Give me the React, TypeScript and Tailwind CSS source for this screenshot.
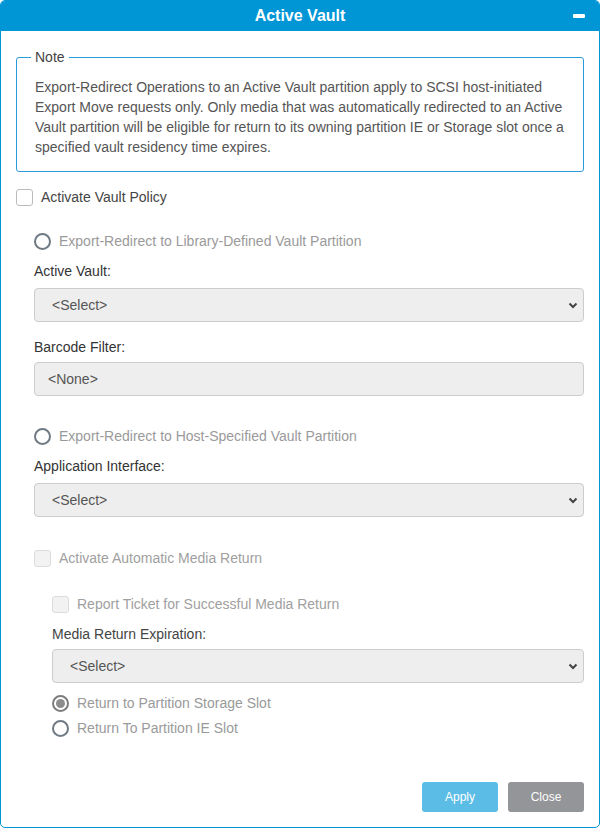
import React from 'react';

const Chevron = () => (
  <svg width="10" height="7" viewBox="0 0 10 7" className="shrink-0">
    <path d="M1.5 1.5 L5 5 L8.5 1.5" fill="none" stroke="#444" strokeWidth="2" />
  </svg>
);

const SelectBox = ({ value }: { value: string }) => (
  <div className="flex items-center justify-between h-[34px] bg-[#eeeeee] border border-[#cccccc] rounded-[4px] pl-[17px] pr-[5px] text-[#555]">
    <span>{value}</span>
    <Chevron />
  </div>
);

const Radio = ({ label, checked = false }: { label: string; checked?: boolean }) => (
  <div className="flex items-center h-[20px] gap-[8px] text-[#9a9a9a]">
    {checked ? (
      <span className="w-[17px] h-[17px] rounded-full border-2 border-[#7d7d7d] flex items-center justify-center">
        <span className="w-[9px] h-[9px] rounded-full bg-[#8c8c8c]" />
      </span>
    ) : (
      <span className="w-[17px] h-[17px] rounded-full border-2 border-[#6f7a84]" />
    )}
    <span>{label}</span>
  </div>
);

const Checkbox = ({ label, disabled = false }: { label: string; disabled?: boolean }) => (
  <div className={`flex items-center h-[20px] gap-[8px] ${disabled ? 'text-[#a0a0a0]' : 'text-[#444]'}`}>
    <span
      className={`w-[17px] h-[17px] rounded-[3px] border ${
        disabled ? 'bg-[#f2f2f2] border-[#dcdcdc]' : 'bg-white border-[#bbbbbb]'
      }`}
    />
    <span>{label}</span>
  </div>
);

const App = () => {
  return (
    <div
      className="w-[600px] h-[828px] bg-white border border-[#0096d6] rounded-[5px] overflow-hidden flex flex-col text-[14px] leading-[20px]"
      style={{ fontFamily: '"Liberation Sans", Arial, sans-serif' }}
    >
      <div className="relative h-[30px] bg-[#0096d6] flex items-center justify-center">
        <span className="text-white font-bold text-[16px]">Active Vault</span>
        <span className="absolute right-[14px] top-[13px] w-[12px] h-[4px] bg-white rounded-[1px]" />
      </div>

      <div className="flex flex-col flex-1 pl-[15px] pr-[15px]">
        <fieldset className="mt-[16px] border border-[#2a9bd8] rounded-[3px] pl-[18px] pr-[18px] pt-[10px] pb-[14px] text-[#555]">
          <legend className="-ml-[4px] px-[4px] text-[#444]">Note</legend>
          <p>
            Export-Redirect Operations to an Active Vault partition apply to SCSI host-initiated
            Export Move requests only. Only media that was automatically redirected to an Active
            Vault partition will be eligible for return to its owning partition IE or Storage slot
            once a specified vault residency time expires.
          </p>
        </fieldset>

        <div className="mt-[15px]">
          <Checkbox label="Activate Vault Policy" />
        </div>

        <div className="ml-[18px] flex flex-col">
          <div className="mt-[24px]">
            <Radio label="Export-Redirect to Library-Defined Vault Partition" />
          </div>
          <div className="mt-[10px] text-[#333]">Active Vault:</div>
          <div className="mt-[7px]">
            <SelectBox value="<Select>" />
          </div>
          <div className="mt-[15px] text-[#333]">Barcode Filter:</div>
          <div className="mt-[5px] h-[34px] bg-[#eeeeee] border border-[#cccccc] rounded-[4px] pl-[13px] flex items-center text-[#555]">
            &lt;None&gt;
          </div>

          <div className="mt-[30px]">
            <Radio label="Export-Redirect to Host-Specified Vault Partition" />
          </div>
          <div className="mt-[10px] text-[#333]">Application Interface:</div>
          <div className="mt-[7px]">
            <SelectBox value="<Select>" />
          </div>

          <div className="mt-[31px]">
            <Checkbox label="Activate Automatic Media Return" disabled />
          </div>

          <div className="ml-[18px] flex flex-col">
            <div className="mt-[26px]">
              <Checkbox label="Report Ticket for Successful Media Return" disabled />
            </div>
            <div className="mt-[10px] text-[#444]">Media Return Expiration:</div>
            <div className="mt-[5px]">
              <SelectBox value="<Select>" />
            </div>
            <div className="mt-[10px]">
              <Radio label="Return to Partition Storage Slot" checked />
            </div>
            <div className="mt-[5px]">
              <Radio label="Return To Partition IE Slot" />
            </div>
          </div>
        </div>

        <div className="mt-auto mb-[15px] flex justify-end gap-[10px]">
          <button className="w-[76px] h-[30px] rounded-[3px] bg-[#5bbde6] text-white text-[12px]">
            Apply
          </button>
          <button className="w-[76px] h-[30px] rounded-[3px] bg-[#939598] text-white text-[12px]">
            Close
          </button>
        </div>
      </div>
    </div>
  );
};

export default App;
